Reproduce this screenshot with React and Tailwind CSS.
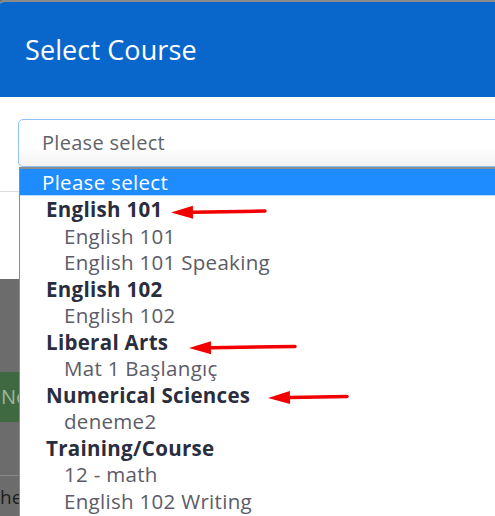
import React from 'react';

const options = [
  { label: 'English 101', items: ['English 101', 'English 101 Speaking'] },
  { label: 'English 102', items: ['English 102'] },
  { label: 'Liberal Arts', items: ['Mat 1 Başlangıç'] },
  { label: 'Numerical Sciences', items: ['deneme2'] },
  { label: 'Training/Course', items: ['12 - math', 'English 102 Writing'] },
];

// red annotation arrows: tail x, tip x, y
const arrows = [
  { x1: 265, x2: 171, y1: 211, y2: 212.5 },
  { x1: 295, x2: 189, y1: 346.5, y2: 348 },
  { x1: 347, x2: 268, y1: 396.5, y2: 398 },
];

const Arrow = ({ x1, x2, y1, y2 }) => {
  const dx = x1 - x2;
  const dy = y1 - y2;
  const len = Math.sqrt(dx * dx + dy * dy);
  const ux = dx / len;
  const uy = dy / len;
  const hx = x2 + ux * 22;
  const hy = y2 + uy * 22;
  return (
    <g>
      <line x1={x1} y1={y1} x2={hx} y2={hy} stroke="#f20000" strokeWidth="3.5" strokeLinecap="round" />
      <polygon points={`${x2},${y2} ${hx - uy * 6.5},${hy + ux * 6.5} ${hx + uy * 6.5},${hy - ux * 6.5}`} fill="#f20000" />
    </g>
  );
};

const App = () => {
  return (
    <div className="relative w-[495px] h-[516px] overflow-hidden bg-[#6c6c6c]" style={{ fontFamily: '"Open Sans", "Noto Sans", sans-serif' }}>
      {/* Modal */}
      <div className="w-[540px] border-t-2 border-[#8a8a8a] rounded-tl-[4px] overflow-hidden bg-white">
        <div className="h-[95px] bg-[#0967cc] pl-[25px] flex items-center">
          <h1 className="text-white text-[27px] tracking-[0.1px] pt-[2px]">Select Course</h1>
        </div>
        <div className="pl-[18px] pt-[22px] pb-[2px]">
          <div className="h-[48px] rounded-[5px] border border-[#8fc3f7] bg-gradient-to-b from-white from-60% to-[#f1f1f1] flex items-center pl-[23px] text-[20px] tracking-[0.3px] text-[#5f6368]">
            Please select
          </div>
        </div>
        <div className="h-[88px] border-t border-[#dcdcdc] mt-[22px]" />
      </div>

      {/* page behind the modal backdrop */}
      <div className="mt-[93px] h-[50px] w-[60px] bg-[#3f6a41] flex items-center pl-[1px] text-[20px] text-[#9fb6a0]">
        New
      </div>
      <div className="mt-[53px] border-t border-[#8a8a8a] pt-[9px] text-[19px] leading-[24px] text-[#1d1d1d]">
        he
      </div>

      {/* open select list */}
      <div className="absolute left-[19px] top-[167px] w-[500px] h-[360px] bg-white border-l border-t-2 border-[#8c8c8c] text-[20.5px] tracking-[0.3px] leading-[26.5px]">
        <div className="h-[27px] bg-[#1e8cff] text-white pl-[22px] leading-[27px] border-b border-[#bcdcff]">Please select</div>
        {options.map((g) => (
          <div key={g.label}>
            <div className="pl-[26px] font-bold text-[#2a2d3e]">{g.label}</div>
            {g.items.map((it) => (
              <div key={it} className="pl-[44px] text-[#5c5b68]">{it}</div>
            ))}
          </div>
        ))}
      </div>

      {/* annotation arrows */}
      <svg className="absolute inset-0 pointer-events-none" width="495" height="516" viewBox="0 0 495 516">
        {arrows.map((a, i) => (
          <Arrow key={i} {...a} />
        ))}
      </svg>
    </div>
  );
};

export default App;
